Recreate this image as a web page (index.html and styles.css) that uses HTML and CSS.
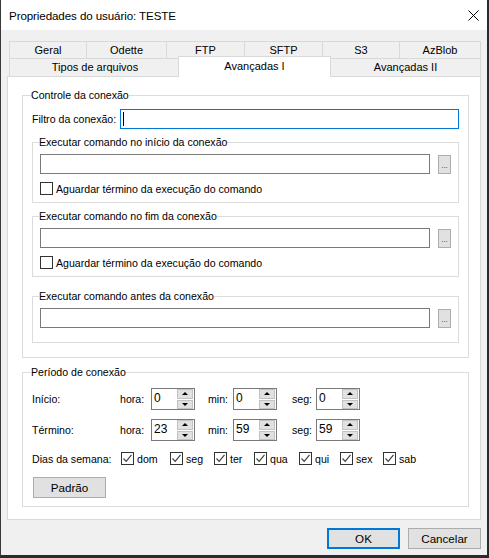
FILE: index.html
```html
<!DOCTYPE html>
<html lang="pt">
<head>
<meta charset="utf-8">
<title>Propriedades do usuário: TESTE</title>
<link rel="stylesheet" href="styles.css">
</head>
<body>
<div class="window">
  <div class="titlebar">
    <span class="title">Propriedades do usuário: TESTE</span>
    <svg class="close" width="11" height="11" viewBox="0 0 11 11"><path d="M0.5 0.5 L10.5 10.5 M10.5 0.5 L0.5 10.5" stroke="#000" stroke-width="1" fill="none"/></svg>
  </div>
  <div class="content">
    <div class="tabrow row1">
      <div class="tab">Geral</div>
      <div class="tab">Odette</div>
      <div class="tab">FTP</div>
      <div class="tab">SFTP</div>
      <div class="tab">S3</div>
      <div class="tab last">AzBlob</div>
    </div>
    <div class="tabrow row2">
      <div class="tab">Tipos de arquivos</div>
      <div class="tab selected">Avançadas I</div>
      <div class="tab last">Avançadas II</div>
    </div>
    <div class="panel">
      <fieldset class="group outer g-conn">
        <legend>Controle da conexão</legend>
        <div class="filter-row">
          <span class="filter-label">Filtro da conexão:</span>
          <div class="textbox focused"><span class="caret"></span></div>
        </div>
        <fieldset class="group inner g1">
          <legend>Executar comando no início da conexão</legend>
          <div class="cmd-row">
            <div class="textbox"></div>
            <div class="browse">...</div>
          </div>
          <label class="check-row"><span class="checkbox"></span><span>Aguardar término da execução do comando</span></label>
        </fieldset>
        <fieldset class="group inner g2">
          <legend>Executar comando no fim da conexão</legend>
          <div class="cmd-row">
            <div class="textbox"></div>
            <div class="browse">...</div>
          </div>
          <label class="check-row"><span class="checkbox"></span><span>Aguardar término da execução do comando</span></label>
        </fieldset>
        <fieldset class="group inner g3">
          <legend>Executar comando antes da conexão</legend>
          <div class="cmd-row">
            <div class="textbox"></div>
            <div class="browse">...</div>
          </div>
        </fieldset>
      </fieldset>

      <fieldset class="group outer g-period">
        <legend>Período de conexão</legend>
        <div class="time-row first">
          <span class="t-label">Início:</span>
          <span class="u-hora">hora:</span>
          <div class="spin"><span class="spin-val">0</span><span class="spin-btns"><span class="spin-btn"><i class="up"></i></span><span class="spin-btn"><i class="down"></i></span></span></div>
          <span class="u-min">min:</span>
          <div class="spin"><span class="spin-val">0</span><span class="spin-btns"><span class="spin-btn"><i class="up"></i></span><span class="spin-btn"><i class="down"></i></span></span></div>
          <span class="u-seg">seg:</span>
          <div class="spin"><span class="spin-val">0</span><span class="spin-btns"><span class="spin-btn"><i class="up"></i></span><span class="spin-btn"><i class="down"></i></span></span></div>
        </div>
        <div class="time-row second">
          <span class="t-label">Término:</span>
          <span class="u-hora">hora:</span>
          <div class="spin"><span class="spin-val">23</span><span class="spin-btns"><span class="spin-btn"><i class="up"></i></span><span class="spin-btn"><i class="down"></i></span></span></div>
          <span class="u-min">min:</span>
          <div class="spin"><span class="spin-val">59</span><span class="spin-btns"><span class="spin-btn"><i class="up"></i></span><span class="spin-btn"><i class="down"></i></span></span></div>
          <span class="u-seg">seg:</span>
          <div class="spin"><span class="spin-val">59</span><span class="spin-btns"><span class="spin-btn"><i class="up"></i></span><span class="spin-btn"><i class="down"></i></span></span></div>
        </div>
        <div class="days-row">
          <span class="d-label">Dias da semana:</span>
          <label class="day"><span class="checkbox checked"><svg width="11" height="11" viewBox="0 0 11 11"><path d="M1.5 5.5 L4.2 8.3 L9.5 1.8" stroke="#3a3a3a" stroke-width="1.1" fill="none"/></svg></span><span>dom</span></label>
          <label class="day"><span class="checkbox checked"><svg width="11" height="11" viewBox="0 0 11 11"><path d="M1.5 5.5 L4.2 8.3 L9.5 1.8" stroke="#3a3a3a" stroke-width="1.1" fill="none"/></svg></span><span>seg</span></label>
          <label class="day"><span class="checkbox checked"><svg width="11" height="11" viewBox="0 0 11 11"><path d="M1.5 5.5 L4.2 8.3 L9.5 1.8" stroke="#3a3a3a" stroke-width="1.1" fill="none"/></svg></span><span>ter</span></label>
          <label class="day"><span class="checkbox checked"><svg width="11" height="11" viewBox="0 0 11 11"><path d="M1.5 5.5 L4.2 8.3 L9.5 1.8" stroke="#3a3a3a" stroke-width="1.1" fill="none"/></svg></span><span>qua</span></label>
          <label class="day"><span class="checkbox checked"><svg width="11" height="11" viewBox="0 0 11 11"><path d="M1.5 5.5 L4.2 8.3 L9.5 1.8" stroke="#3a3a3a" stroke-width="1.1" fill="none"/></svg></span><span>qui</span></label>
          <label class="day"><span class="checkbox checked"><svg width="11" height="11" viewBox="0 0 11 11"><path d="M1.5 5.5 L4.2 8.3 L9.5 1.8" stroke="#3a3a3a" stroke-width="1.1" fill="none"/></svg></span><span>sex</span></label>
          <label class="day"><span class="checkbox checked"><svg width="11" height="11" viewBox="0 0 11 11"><path d="M1.5 5.5 L4.2 8.3 L9.5 1.8" stroke="#3a3a3a" stroke-width="1.1" fill="none"/></svg></span><span>sab</span></label>
        </div>
        <div class="btn padrao">Padrão</div>
      </fieldset>
    </div>
    <div class="footer">
      <div class="btn ok">OK</div>
      <div class="btn">Cancelar</div>
    </div>
  </div>
</div>
</body>
</html>
```

FILE: styles.css
```css
* { box-sizing: border-box; }
html, body { margin: 0; padding: 0; background: #2b2b2b; }
body {
  font-family: "Liberation Sans", Arial, sans-serif;
  font-size: 10.6px;
  color: #000;
}
.window {
  width: 489px;
  height: 558px;
  background: #f0f0f0;
  border-left: 1px solid #3a3a3a;
  border-right: 2px solid #2b2b2b;
  border-bottom: 3px solid #2b2b2b;
  display: flex;
  flex-direction: column;
}
.titlebar {
  height: 30px;
  background: #fff;
  display: flex;
  align-items: center;
  justify-content: space-between;
  padding: 0 8px 0 8px;
}
.title {
  font-size: 11.6px;
  letter-spacing: -0.1px;
  padding-top: 1px;
}
.close { display: block; margin-top: 1px; }
.content {
  padding: 11px 6px 0 6px;
  flex: 1;
}
.tabrow {
  margin-left: 2px;
  width: 472px;
  display: grid;
}
.row1 {
  grid-template-columns: 77px 80px 78px 78px 77px 82px;
  height: 17px;
}
.row2 {
  grid-template-columns: 171px 150px 151px;
  height: 18px;
}
.tab {
  border-top: 1px solid #d9d9d9;
  border-left: 1px solid #d9d9d9;
  background: #f0f0f0;
  display: flex;
  align-items: center;
  justify-content: center;
  line-height: 13px;
  white-space: nowrap;
  font-size: 11px;
}
.tab.last { border-right: 1px solid #d9d9d9; }
.tab.selected {
  position: relative;
  z-index: 1;
  margin: -2px -1px -1px -2px;
  background: #fff;
  border: 1px solid #d9d9d9;
  border-bottom: none;
  align-items: flex-start;
  padding-top: 3px;
}
.panel {
  width: 474px;
  height: 444px;
  background: #fff;
  border: 1px solid #d9d9d9;
  padding: 12px 11px 0 14px;
}
.group {
  border: 1px solid #dcdcdc;
  margin: 0;
  min-width: 0;
}
.group legend {
  padding: 0;
  line-height: 13px;
  height: 13px;
  margin-left: -1px;
}
.outer {
  padding: 0 9px 0 9px;
}
.g-conn { padding-bottom: 14px; }
.filter-row {
  display: flex;
  align-items: center;
  margin-top: 7px;
  height: 20px;
}
.filter-label { width: 88px; }
.textbox {
  height: 20px;
  border: 1px solid #7a7a7a;
  background: #fff;
  position: relative;
}
.filter-row .textbox { flex: 1; margin-right: 0; }
.textbox.focused { border-color: #0078d7; }
.caret {
  position: absolute;
  left: 2px;
  top: 2px;
  width: 1px;
  height: 14px;
  background: #000;
}
.inner {
  padding: 0 7px 7px 7px;
  margin-top: 7px;
}
.g3 { padding-bottom: 14px; margin-top: 13px; }
.cmd-row {
  display: flex;
  align-items: flex-start;
  margin-top: 5px;
}
.cmd-row .textbox { width: 390px; }
.browse {
  width: 13px;
  height: 19px;
  margin-left: 8px;
  margin-top: 1px;
  background: #e1e1e1;
  border: 1px solid #adadad;
  font-size: 8px;
  line-height: 10px;
  text-align: center;
  color: #333;
  letter-spacing: 0;
  padding-top: 5px;
  overflow: visible;
  white-space: nowrap;
  display: flex;
  justify-content: center;
}
.check-row {
  display: flex;
  align-items: center;
  margin-top: 8px;
  height: 13px;
  white-space: nowrap;
}
.checkbox {
  width: 13px;
  height: 13px;
  border: 1px solid #333;
  background: #fff;
  flex: none;
  margin-right: 3px;
  display: flex;
  align-items: center;
  justify-content: center;
}
.checkbox svg { display: block; }
.g-period {
  margin-top: 8px;
  padding-bottom: 8px;
}
.time-row {
  display: flex;
  align-items: center;
  height: 22px;
  margin-top: 9px;
}
.t-label { width: 88px; }
.u-hora { width: 31px; }
.u-min { width: 25px; margin-left: 13px; }
.u-seg { width: 24px; margin-left: 15px; }
.spin {
  width: 44px;
  height: 22px;
  border: 1px solid #7a7a7a;
  background: #fff;
  display: flex;
}
.spin-val {
  flex: 1;
  padding-left: 2px;
  padding-top: 2px;
  font-size: 12px;
  line-height: 14px;
}
.spin-btns {
  width: 17px;
  display: flex;
  flex-direction: column;
  gap: 1px;
  padding: 0 1px 0 0;
}
.spin-btn {
  flex: 1;
  background: #e1e1e1;
  border: 1px solid #c2c2c2;
  display: flex;
  align-items: center;
  justify-content: center;
}
.spin-btn i {
  width: 0;
  height: 0;
  border-left: 3px solid transparent;
  border-right: 3px solid transparent;
}
.spin-btn i.up { border-bottom: 3px solid #000; }
.spin-btn i.down { border-top: 3px solid #000; }
.days-row {
  display: grid;
  grid-template-columns: 89px 49px 44px 40px 45px 41px 43px auto;
  align-items: center;
  height: 13px;
  margin-top: 11px;
}
.day {
  display: flex;
  align-items: center;
  white-space: nowrap;
}
.btn {
  width: 73px;
  height: 21px;
  background: #e1e1e1;
  border: 1px solid #adadad;
  display: flex;
  align-items: center;
  justify-content: center;
  font-size: 11.6px;
}
.padrao {
  margin-top: 12px;
  margin-left: 1px;
}
.footer {
  display: flex;
  justify-content: flex-end;
  gap: 8px;
  margin-top: 8px;
}
.btn.ok {
  border: 2px solid #0078d7;
}
```
